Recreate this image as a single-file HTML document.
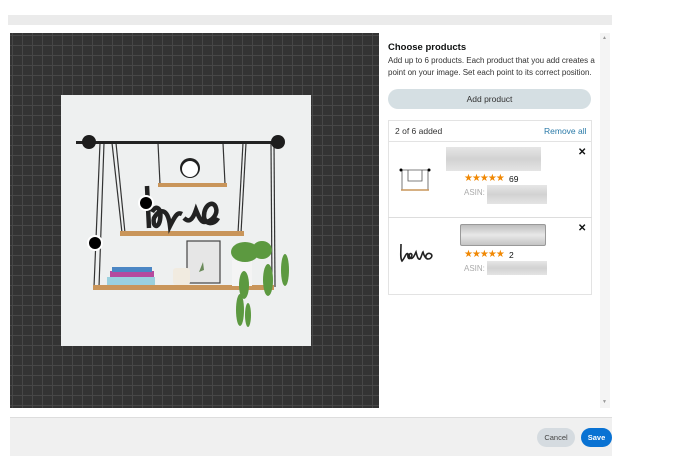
<!DOCTYPE html>
<html><head><style>
*{margin:0;padding:0;box-sizing:border-box}
body{width:675px;height:464px;background:#fff;font-family:"Liberation Sans",sans-serif;position:relative;overflow:hidden;color:#0f1111}
.a{position:absolute}
.grid{left:10px;top:33px;width:369px;height:375px;background-color:#333;background-image:linear-gradient(#474747 1px,transparent 1px),linear-gradient(90deg,#474747 1px,transparent 1px);background-size:10px 10px;background-position:2px 2px}
.blur{background:linear-gradient(180deg,#e6e6e6,#d2d2d2,#e4e4e4)}
.st{color:#f08804;font-size:10px;letter-spacing:-1px}
</style></head><body>
<div class="a" style="left:8px;top:15px;width:604px;height:10px;background:#ebebeb"></div>
<div class="a grid"></div>
<div class="a" style="left:61px;top:95px;width:250px;height:251px;background:#eef0f0"></div>
<svg class="a" style="left:0;top:0" width="675" height="464">
<g stroke="#333" stroke-width="1.2" fill="none">
<line x1="100" y1="143" x2="94" y2="287"/><line x1="104" y1="143" x2="99" y2="287"/>
<line x1="112" y1="143" x2="122" y2="233"/><line x1="116" y1="143" x2="125" y2="233"/>
<line x1="158" y1="143" x2="160" y2="184"/><line x1="223" y1="143" x2="225" y2="184"/>
<line x1="246" y1="143" x2="241" y2="233"/><line x1="243" y1="143" x2="238" y2="233"/>
<line x1="271" y1="143" x2="272" y2="287"/><line x1="274" y1="143" x2="275" y2="287"/>
</g>
<rect x="76" y="141" width="204" height="3" fill="#222"/>
<circle cx="89" cy="142" r="7" fill="#1d1d1d"/><circle cx="278" cy="142" r="7" fill="#1d1d1d"/>
<rect x="158" y="183" width="69" height="4" fill="#c9955a"/>
<rect x="120" y="231" width="124" height="5" fill="#c9955a"/>
<rect x="93" y="285" width="181" height="5" fill="#c9955a"/>
<circle cx="190" cy="168" r="10" fill="#222"/><circle cx="190" cy="169" r="8" fill="#fff"/>
<path d="M147 186 L149 228 M152 212 c4 -8 10 -4 8 8 c-2 10 -8 6 -6 -2 c6 -10 14 -10 16 8 c6 -12 8 -14 12 -12 M184 218 c4 4 8 4 12 -8 c4 10 6 12 8 12 c8 0 14 -8 12 -14 c-2 -8 -12 -4 -12 8 c0 8 10 10 14 2" stroke="#222" stroke-width="4.5" fill="none"/>
<rect x="187" y="241" width="33" height="42" fill="#e6e6e6" stroke="#444" stroke-width="1.2"/>
<path d="M203 262 l-4 10 l5 -2 z" fill="#6a8a5a"/>
<rect x="107" y="277" width="48" height="8" fill="#9ad0de"/>
<rect x="110" y="271" width="44" height="6" fill="#b54a9e"/>
<rect x="112" y="267" width="40" height="5" fill="#4b86c4"/>
<rect x="173" y="268" width="17" height="17" rx="3" fill="#f1ebe0"/>
<rect x="232" y="260" width="20" height="26" fill="#f4f4f4"/>
<g fill="#5c9940">
<ellipse cx="245" cy="252" rx="14" ry="10"/><ellipse cx="262" cy="250" rx="10" ry="9"/>
<ellipse cx="244" cy="285" rx="5" ry="14"/><ellipse cx="240" cy="310" rx="4" ry="16"/>
<ellipse cx="268" cy="280" rx="5" ry="16"/><ellipse cx="285" cy="270" rx="4" ry="16"/>
<ellipse cx="248" cy="315" rx="3" ry="12"/>
</g>
<circle cx="146" cy="203" r="8" fill="#fff"/><circle cx="146" cy="203" r="6" fill="#000"/>
<circle cx="95" cy="243" r="8" fill="#fff"/><circle cx="95" cy="243" r="6" fill="#000"/>
</svg>
<div class="a" style="left:600px;top:33px;width:10px;height:375px;background:#f4f4f4"></div>
<div class="a" style="left:602px;top:35px;font-size:5px;color:#999">▲</div>
<div class="a" style="left:602px;top:399px;font-size:5px;color:#999">▼</div>
<div class="a" style="left:388px;top:42px;font-size:9.5px;font-weight:bold">Choose products</div>
<div class="a" style="left:388px;top:55px;width:212px;font-size:8px;line-height:11.5px;color:#333">Add up to 6 products. Each product that you add creates a point on your image. Set each point to its correct position.</div>
<div class="a" style="left:388px;top:89px;width:203px;height:20px;border-radius:10px;background:#d5dfe3;font-size:8.5px;text-align:center;line-height:20px;color:#333">Add product</div>
<div class="a" style="left:388px;top:120px;width:204px;height:175px;border:1px solid #e3e3e3"></div>
<div class="a" style="left:388px;top:141px;width:204px;height:1px;background:#e3e3e3"></div>
<div class="a" style="left:388px;top:217px;width:204px;height:1px;background:#ddd"></div>
<div class="a" style="left:395px;top:126px;font-size:8.5px;color:#333">2 of 6 added</div>
<div class="a" style="left:544px;top:126px;font-size:8.5px;color:#2a7aa8">Remove all</div>
<svg class="a" style="left:398px;top:165px" width="36" height="28"><g stroke="#555" stroke-width="0.8" fill="none"><path d="M3 5 H31 M4 5 V25 M30 5 V25 M10 5 V16 H24 V5"/></g><circle cx="3" cy="5" r="1.5"/><circle cx="31" cy="5" r="1.5"/><line x1="3" y1="25" x2="31" y2="25" stroke="#c9955a" stroke-width="1.5"/></svg>
<div class="a blur" style="left:446px;top:147px;width:95px;height:24px"></div>
<div class="a st" style="left:464px;top:173px">★★★★★</div><div class="a" style="left:509px;top:174px;font-size:8.5px">69</div>
<div class="a" style="left:464px;top:188px;font-size:8px;color:#aaa">ASIN:</div>
<div class="a blur" style="left:487px;top:185px;width:60px;height:19px"></div>
<div class="a" style="left:578px;top:147px;font-size:10px;font-weight:bold">✕</div>
<svg class="a" style="left:398px;top:242px" width="38" height="22"><path d="M3 2 C3 10 2 16 4 19 C7 16 8 10 10 12 C9 18 13 18 14 13 C13 10 10 12 12 16 C15 18 17 12 18 10 C19 14 20 18 22 17 C24 14 24 11 25 10 C26 14 28 17 30 17 C33 17 35 14 33 12 C30 10 27 13 28 16" stroke="#222" stroke-width="1.6" fill="none"/></svg>
<div class="a" style="left:460px;top:224px;width:86px;height:22px;border:1px solid #999;border-radius:2px;background:linear-gradient(180deg,#bdbdbd,#e8e8e8,#c4c4c4)"></div>
<div class="a st" style="left:464px;top:249px">★★★★★</div><div class="a" style="left:509px;top:250px;font-size:8.5px">2</div>
<div class="a" style="left:464px;top:264px;font-size:8px;color:#aaa">ASIN:</div>
<div class="a blur" style="left:487px;top:261px;width:60px;height:14px"></div>
<div class="a" style="left:578px;top:223px;font-size:10px;font-weight:bold">✕</div>
<div class="a" style="left:10px;top:417px;width:602px;height:39px;background:#f0f0f0;border-top:1px solid #ddd"></div>
<div class="a" style="left:537px;top:428px;width:38px;height:19px;border-radius:10px;background:#d5dbe0;font-size:7.5px;text-align:center;line-height:19px;color:#444">Cancel</div>
<div class="a" style="left:581px;top:428px;width:31px;height:19px;border-radius:10px;background:#0972d3;font-size:7.5px;text-align:center;line-height:19px;color:#fff;font-weight:bold">Save</div>
</body></html>
